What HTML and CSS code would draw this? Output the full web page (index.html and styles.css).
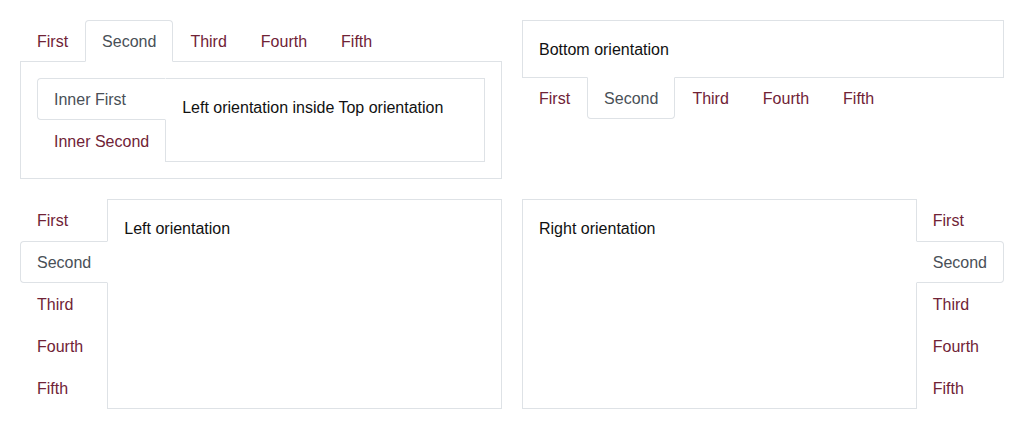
FILE: index.html
```html
<!DOCTYPE html>
<html>
<head>
<meta charset="utf-8">
<link rel="stylesheet" href="styles.css">
</head>
<body>
<div class="page">
  <div class="tabset top">
    <ul class="tabs">
      <li><a class="tab">First</a></li>
      <li><a class="tab active">Second</a></li>
      <li><a class="tab">Third</a></li>
      <li><a class="tab">Fourth</a></li>
      <li><a class="tab">Fifth</a></li>
    </ul>
    <div class="pane wrap">
      <div class="tabset left">
        <ul class="tabs">
          <li><a class="tab active">Inner First</a></li>
          <li><a class="tab">Inner Second</a></li>
        </ul>
        <div class="pane">Left orientation inside Top orientation</div>
      </div>
    </div>
  </div>

  <div class="tabset bottom">
    <div class="pane">Bottom orientation</div>
    <ul class="tabs">
      <li><a class="tab">First</a></li>
      <li><a class="tab active">Second</a></li>
      <li><a class="tab">Third</a></li>
      <li><a class="tab">Fourth</a></li>
      <li><a class="tab">Fifth</a></li>
    </ul>
  </div>

  <div class="tabset left">
    <ul class="tabs">
      <li><a class="tab">First</a></li>
      <li><a class="tab active">Second</a></li>
      <li><a class="tab">Third</a></li>
      <li><a class="tab">Fourth</a></li>
      <li><a class="tab">Fifth</a></li>
    </ul>
    <div class="pane">Left orientation</div>
  </div>

  <div class="tabset right">
    <div class="pane">Right orientation</div>
    <ul class="tabs">
      <li><a class="tab">First</a></li>
      <li><a class="tab active">Second</a></li>
      <li><a class="tab">Third</a></li>
      <li><a class="tab">Fourth</a></li>
      <li><a class="tab">Fifth</a></li>
    </ul>
  </div>
</div>
</body>
</html>
```

FILE: styles.css
```css
* { box-sizing: border-box; }
body {
  margin: 0;
  background: #fff;
  font-family: "Liberation Sans", Arial, sans-serif;
  font-size: 16px;
  color: #111;
}
.page {
  padding: 20px;
  display: grid;
  grid-template-columns: 1fr 1fr;
  gap: 20px;
  align-items: start;
}
.tabset { display: flex; }
.tabset.top, .tabset.bottom { flex-direction: column; }
.tabs {
  list-style: none;
  margin: 0;
  padding: 0;
  display: flex;
  position: relative;
  z-index: 1;
}
.tab {
  display: block;
  padding: 11px 16px 9px;
  line-height: 20px;
  border: 1px solid transparent;
  color: #702336;
  cursor: pointer;
  white-space: nowrap;
}
.tab.active {
  color: #495057;
  background: #fff;
  border-color: #dee2e6;
}
.pane {
  border: 1px solid #dee2e6;
  padding: 17px 16px 15px;
  line-height: 24px;
  flex: 1;
}
.pane.wrap { padding: 16px; }
/* top */
.top > .tabs { margin-bottom: -1px; }
.top > .tabs .tab.active { border-bottom-color: #fff; border-radius: 4px 4px 0 0; }
/* bottom */
.bottom > .tabs { margin-top: -1px; }
.bottom > .tabs .tab.active { border-top-color: #fff; border-radius: 0 0 4px 4px; }
/* left */
.left > .tabs { flex-direction: column; margin-right: -1px; }
.left > .tabs .tab.active { border-right-color: #fff; border-radius: 4px 0 0 4px; }
/* right */
.right > .tabs { flex-direction: column; margin-left: -1px; }
.right > .tabs .tab.active { border-left-color: #fff; border-radius: 0 4px 4px 0; }
```
